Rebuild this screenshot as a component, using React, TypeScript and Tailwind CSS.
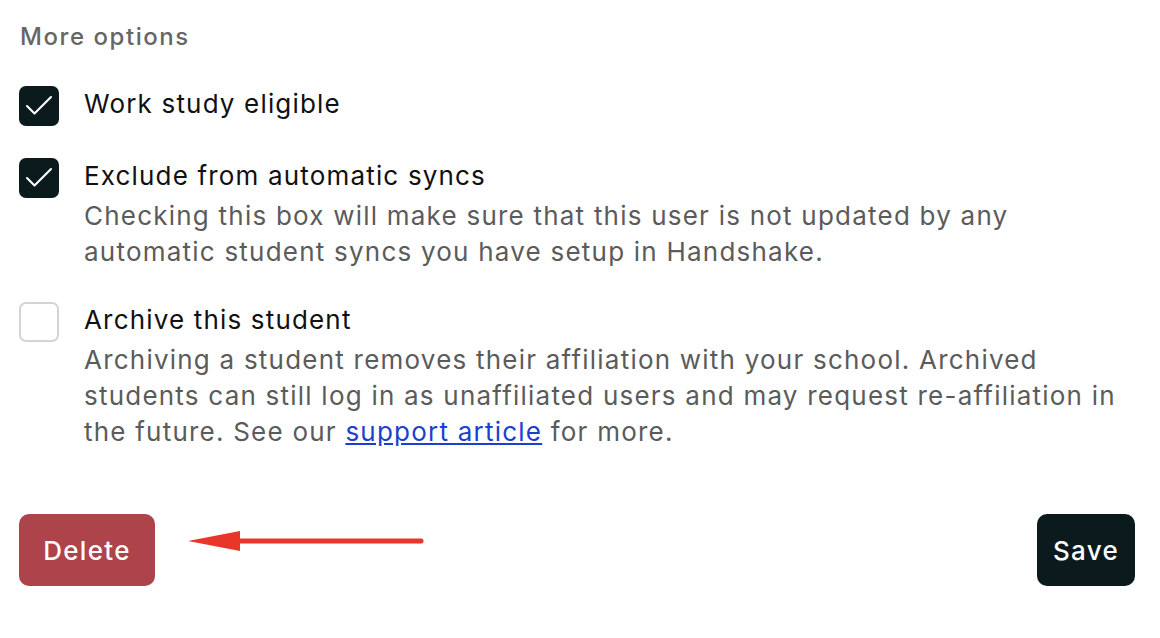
import { Check } from 'lucide-react';

const options = [
  { label: 'Work study eligible', checked: true, desc: null },
  {
    label: 'Exclude from automatic syncs',
    checked: true,
    desc: 'Checking this box will make sure that this user is not updated by any automatic student syncs you have setup in Handshake.',
  },
];

const Box = ({ checked }: { checked: boolean }) =>
  checked ? (
    <div className="w-10 h-10 shrink-0 rounded-[7px] bg-[#0b1a1d] flex items-center justify-center">
      <Check className="w-9 h-9 text-white" strokeWidth={1.4} />
    </div>
  ) : (
    <div className="w-10 h-10 shrink-0 rounded-[7px] border-2 border-[#d4d4d4] bg-white" />
  );

export default function App() {
  return (
    <div className="w-[1160px] h-[638px] bg-white pl-[19px] pr-[25px] pt-[22px] font-['Inter',sans-serif]">
      <h3 className="text-[24px] leading-[30px] font-medium tracking-[0.065em] text-[#666666] pl-px">More options</h3>

      <div className="mt-[34px] flex flex-col gap-8">
        {options.map((o, i) => (
          <div key={i} className="flex gap-[25px]">
            <Box checked={o.checked} />
            <div>
              <div className="text-[26px] leading-[36px] tracking-[0.045em] text-[#111]">{o.label}</div>
              {o.desc && (
                <p className="mt-1 text-[26px] leading-[36px] tracking-[0.047em] text-[#5b5b5b]">{o.desc}</p>
              )}
            </div>
          </div>
        ))}

        <div className="flex gap-[25px]">
          <Box checked={false} />
          <div>
            <div className="text-[26px] leading-[36px] tracking-[0.045em] text-[#111]">Archive this student</div>
            <p className="mt-1 text-[26px] leading-[36px] tracking-[0.047em] text-[#5b5b5b]">
              Archiving a student removes their affiliation with your school. Archived students can still log in as
              unaffiliated users and may request re-affiliation in the future. See our{' '}
              <a href="#" className="text-[#1b3fcf] underline underline-offset-2">
                support article
              </a>{' '}
              for more.
            </p>
          </div>
        </div>
      </div>

      <div className="mt-[64px] flex items-center justify-between">
        <div className="flex items-center">
          <button className="h-[72px] w-[136px] rounded-[10px] bg-[#ad434b] text-white text-[26px] font-medium tracking-[0.05em]">
            Delete
          </button>
          <svg width="240" height="24" viewBox="0 0 240 24" className="ml-[33px] -mt-[18px]">
            <line x1="48" y1="12" x2="233" y2="12" stroke="#e8372a" strokeWidth="5" strokeLinecap="round" />
            <polygon points="0,12 52,2 52,22" fill="#e8372a" />
          </svg>
        </div>
        <button className="h-[72px] w-[98px] rounded-[10px] bg-[#0b1a1d] text-white text-[26px] font-medium tracking-[0.05em]">
          Save
        </button>
      </div>
    </div>
  );
}
